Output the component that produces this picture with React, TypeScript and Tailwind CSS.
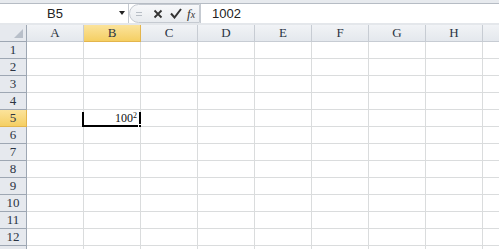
const cols = ["A", "B", "C", "D", "E", "F", "G", "H"];
const rows = Array.from({ length: 13 }, (_, i) => i + 1);

const serif = { fontFamily: '"Liberation Serif", "DejaVu Serif", serif' };

const FormulaBar = () => (
  <div className="flex h-[25px] flex-col bg-[#dfe3e8]">
    <div className="h-[4px] border-b border-[#b6bcc4] bg-[#e7eaee]" />
    <div className="flex h-[19px] items-stretch bg-white font-['Liberation_Sans',sans-serif] text-[13px] text-[#222]">
      <div className="relative flex w-[129px] items-center justify-center border-r border-[#c5cad1]">
        <span className="-ml-[18px]">B5</span>
        <span className="absolute right-[3px] top-[7px] h-0 w-0 border-x-[3.5px] border-t-[4px] border-x-transparent border-t-[#222]" />
      </div>
      <div className="flex w-[71px] items-center rounded-l-[10px] border border-[#c5cad1] bg-gradient-to-b from-[#f7f8fa] to-[#e8ebef]">
        <div className="ml-[6px] flex h-[12px] w-[6px] flex-col justify-center gap-[2px]">
          <span className="h-px w-full bg-[#b8bec6]" />
          <span className="h-px w-full bg-[#b8bec6]" />
        </div>
        <svg className="ml-[11px]" width="10" height="10" viewBox="0 0 10 10">
          <path d="M1.5 1.5 L8.5 8.5 M8.5 1.5 L1.5 8.5" stroke="#333" strokeWidth="1.8" />
        </svg>
        <svg className="ml-[7px]" width="12" height="11" viewBox="0 0 12 11">
          <path d="M1 5.5 L4.5 9.5 L11 1" stroke="#333" strokeWidth="2" fill="none" />
        </svg>
        <span className="ml-[5px] text-[13px] italic text-[#333]" style={serif}>
          f<span className="text-[10px]">x</span>
        </span>
      </div>
      <div className="flex flex-1 items-center border-l border-[#c5cad1] pl-[11px]">1002</div>
    </div>
    <div className="h-[2px] bg-[#e4e7eb]" />
  </div>
);

const Sheet = () => (
  <div className="grid grid-cols-[27px_repeat(8,57px)_1fr] text-[13px] text-[#2b3443]" style={serif}>
    <div className="relative h-[17px] border-b border-r border-[#9ea7b3] bg-[#e6e9ee]">
      <span className="absolute bottom-[3px] right-[3px] h-0 w-0 border-b-[9px] border-l-[9px] border-b-[#b8bfc9] border-l-transparent" />
    </div>
    {cols.map((c) => (
      <div
        key={c}
        className={
          c === "B"
            ? "flex h-[17px] items-center justify-center border-b border-r border-[#e3b54d] bg-gradient-to-b from-[#fbe39b] to-[#f5cf62]"
            : "flex h-[17px] items-center justify-center border-b border-r border-[#c7ccd3] bg-gradient-to-b from-[#f1f3f6] to-[#e4e8ed]"
        }
      >
        {c}
      </div>
    ))}
    <div className="h-[17px] border-b border-[#c7ccd3] bg-gradient-to-b from-[#f1f3f6] to-[#e4e8ed]" />
    {rows.map((r) => (
      <Row key={r} r={r} />
    ))}
  </div>
);

const Row = ({ r }: { r: number }) => (
  <>
    <div
      className={
        r === 5
          ? "flex h-[17px] items-center justify-center border-b border-r border-[#e3b54d] bg-gradient-to-b from-[#fbe39b] to-[#f5cf62]"
          : "flex h-[17px] items-center justify-center border-b border-r border-[#9ea7b3] bg-[#e6e9ee]"
      }
    >
      {r < 13 ? r : ""}
    </div>
    {cols.map((c) => (
      <div key={c} className="relative h-[17px] border-b border-r border-[#dadcdd] bg-white">
        {r === 5 && c === "B" && (
          <div className="absolute -bottom-px -left-[2px] -right-px top-[2px] border-x-2 border-b-2 border-black">
            <span className="absolute bottom-[1px] right-[2px] text-[12px] leading-none text-[#111]">
              100<sup className="text-[8px]">2</sup>
            </span>
            <span className="absolute -bottom-[3px] -right-[3px] h-[4px] w-[4px] border border-white bg-black" />
          </div>
        )}
      </div>
    ))}
    <div className="h-[17px] border-b border-[#dadcdd] bg-white" />
  </>
);

export default function App() {
  return (
    <div className="h-[249px] w-[499px] overflow-hidden bg-white">
      <FormulaBar />
      <Sheet />
    </div>
  );
}
